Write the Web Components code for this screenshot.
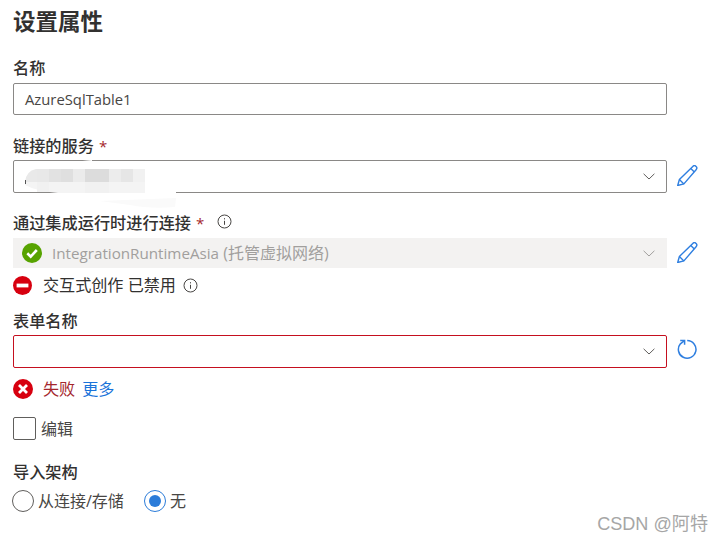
<!DOCTYPE html>
<html lang="zh">
<head>
<meta charset="utf-8">
<title>设置属性</title>
<style>
  html, body { margin: 0; padding: 0; background: #fff; }
  body {
    width: 723px; height: 542px; overflow: hidden; position: relative;
    font-family: "Open Sans", "Noto Sans CJK SC", sans-serif;
    color: #323130;
  }
  .line { display: flex; align-items: center; gap: 8px; }
  .latin { font-size: 15.2px; }
</style>
</head>
<body>
<props-panel>
  <h-title slot="title">设置属性</h-title>

  <form-row top="19">
    <form-label>名称</form-label>
    <text-box value="AzureSqlTable1" style="margin-top:4px"></text-box>
  </form-row>

  <form-row top="20">
    <form-label required>链接的服务</form-label>
    <div class="line">
      <combo-box smudged></combo-box>
      <act-icon name="pencil" style="margin-top:5px"></act-icon>
    </div>
  </form-row>

  <form-row top="19">
    <form-label required info>通过集成运行时进行连接</form-label>
    <div class="line" style="margin-top:4px">
      <combo-box disabled status="ok"><span class="latin">IntegrationRuntimeAsia</span> (托管虚拟网络)</combo-box>
      <act-icon name="pencil"></act-icon>
    </div>
  </form-row>

  <status-line kind="blocked" info style="margin-top:7px">交互式创作 已禁用</status-line>

  <form-row top="15">
    <form-label>表单名称</form-label>
    <div class="line">
      <combo-box invalid></combo-box>
      <act-icon name="refresh"></act-icon>
    </div>
  </form-row>

  <status-line kind="error" link="更多" style="margin-top:11px">失败</status-line>

  <check-box style="margin-top:18px">编辑</check-box>

  <form-row top="21">
    <form-label>导入架构</form-label>
    <div class="line" style="gap:0;margin:7px 0 0 -1px">
      <radio-item>从连接/存储</radio-item>
      <radio-item checked style="margin-left:20px">无</radio-item>
    </div>
  </form-row>
</props-panel>
<water-mark>CSDN @阿特</water-mark>

<script>
const fontStack = '"Open Sans", "Noto Sans CJK SC", sans-serif';
const chevron = `<svg width="12" height="7" viewBox="0 0 12 7" fill="none"><path d="M.6.8 6 6 11.4.8" stroke="currentColor" stroke-width="1"/></svg>`;
const infoIcon = `<svg width="15" height="15" viewBox="0 0 15 15" fill="none" stroke="#484644"><circle cx="7.5" cy="7.5" r="6.5"/><path d="M7.5 6.8v4" /><path d="M7.5 4.2v1.2"/></svg>`;

class PropsPanel extends HTMLElement {
  constructor() {
    super();
    this.attachShadow({ mode: 'open' }).innerHTML = `
      <style>
        :host { display: block; padding: 6px 26px 0 13px; }
      </style>
      <slot name="title"></slot>
      <slot></slot>`;
  }
}

class HTitle extends HTMLElement {
  constructor() {
    super();
    this.attachShadow({ mode: 'open' }).innerHTML = `
      <style>
        :host { display: block; font: 700 22.5px/32px ${fontStack}; color: #323130; height: 32px; }
      </style>
      <slot></slot>`;
  }
}

class FormRow extends HTMLElement {
  constructor() {
    super();
    this.attachShadow({ mode: 'open' }).innerHTML = `
      <style>:host { display: block; }</style>
      <slot></slot>`;
  }
  connectedCallback() {
    this.style.marginTop = (this.getAttribute('top') || 0) + 'px';
  }
}

class FormLabel extends HTMLElement {
  constructor() {
    super();
    this.attachShadow({ mode: 'open' }).innerHTML = `
      <style>
        [hidden] { display: none !important; }
        :host { display: flex; align-items: center; height: 22px; margin-bottom: 3px; font: 500 16.2px/22px ${fontStack}; color: #323130; }
        .req { color: #a4262c; margin-left: 5px; font-size: 15px; }
        .info { margin-left: 13px; display: flex; margin-top: -3px; }
      </style>
      <slot></slot>
      <span class="req" hidden>*</span>
      <span class="info" hidden>${infoIcon}</span>`;
  }
  connectedCallback() {
    this.shadowRoot.querySelector('.req').hidden = !this.hasAttribute('required');
    this.shadowRoot.querySelector('.info').hidden = !this.hasAttribute('info');
  }
}

class TextBox extends HTMLElement {
  constructor() {
    super();
    this.attachShadow({ mode: 'open' }).innerHTML = `
      <style>
        :host { display: block; width: 654px; box-sizing: border-box; height: 32px; border: 1px solid #8a8886; border-radius: 2px; padding: 0 11px; font: 400 14.8px/30px ${fontStack}; color: #484644; }
      </style>
      <span></span>`;
  }
  connectedCallback() {
    this.shadowRoot.querySelector('span').textContent = this.getAttribute('value');
  }
}

class ComboBox extends HTMLElement {
  constructor() {
    super();
    this.attachShadow({ mode: 'open' }).innerHTML = `
      <style>
        :host { display: flex; align-items: center; position: relative; flex: none; width: 654px; box-sizing: border-box; height: 33px; border: 1px solid #8a8886; border-radius: 2px; padding: 0 11px 0 9px; font: 400 16px/30px ${fontStack}; color: #484644; }
        :host([disabled]) { border: none; height: 30px; background: #f3f2f1; color: #a19f9d; border-radius: 0; padding-right: 12px; }
        :host([invalid]) { border-color: #c50f1f; }
        .val { flex: 1; display: flex; align-items: center; gap: 10px; white-space: pre; }
        .arrow { display: flex; color: #605e5c; }
        :host([disabled]) .arrow { color: #a19f9d; }
        .ok { display: none; width: 20px; height: 20px; flex: none; }
        :host([status="ok"]) .ok { display: block; }
        .smudge { display: none; position: absolute; left: -1px; top: -11px; }
        :host([smudged]) .smudge { display: block; }
      </style>
      <div class="val">
        <svg class="ok" viewBox="0 0 20 20"><circle cx="10" cy="10" r="10" fill="#57a300"/><path d="M5.3 10.3 8.7 13.6 14.8 7" fill="none" stroke="#fff" stroke-width="2.6"/></svg>
        <span><slot></slot></span>
      </div>
      <span class="arrow">${chevron}</span>
      <svg class="smudge" width="170" height="60" viewBox="13 149 170 60">
        <path d="M58 193 L150 192 L176 196 L175 206 Q150 208 130 204Z" fill="#fff"/>
        <path d="M73 161 L92 159 L92 168 L73 168Z" fill="#fff"/>
        <path d="M58 188 H176 V198 H58Z" fill="#fff"/>
        <path d="M100 200 L176 197 L175 206 Q150 208 130 204Z" fill="#fafafa"/>
        <path d="M25 181 Q26 170 36 168 H37 V181Z" fill="#e9e9e9"/>
        <rect x="37" y="168" width="12" height="13" fill="#e8e8e8"/>
        <rect x="49" y="168" width="12" height="13" fill="#e2e2e2"/>
        <rect x="61" y="168" width="12" height="13" fill="#dfdfdf"/>
        <rect x="73" y="168" width="12" height="13" fill="#ebebeb"/>
        <rect x="85" y="168" width="24" height="13" fill="#dcdcdc"/>
        <rect x="109" y="168" width="12" height="13" fill="#ececec"/>
        <rect x="121" y="168" width="12" height="13" fill="#e6e6e6"/>
        <rect x="133" y="168" width="12" height="13" fill="#f1f1f1"/>
        <path d="M25 181 H145 V192 H58 Q36 190 25 184Z" fill="#f4f4f4"/>
        <rect x="37" y="181" width="12" height="10" fill="#f1f1f1"/>
        <rect x="85" y="181" width="24" height="11" fill="#f1f1f1"/>
        <rect x="25" y="179" width="1" height="4" fill="#555"/>
      </svg>`;
  }
}

class ActIcon extends HTMLElement {
  constructor() {
    super();
    this.attachShadow({ mode: 'open' }).innerHTML = `
      <style>:host { display: flex; flex: none; align-self: flex-start; margin: 4px 0 0 2px; color: #2f7fe0; }</style>
      <span></span>`;
  }
  connectedCallback() {
    const p = this.getAttribute('name') === 'refresh'
      ? `<svg width="21" height="21" viewBox="0 0 21 21" fill="none" stroke="currentColor" stroke-width="1.5"><path d="M10.2 1.6a8.8 8.8 0 1 1-6.8 3.2L7.4 1.6"/><path d="M3.2 1.4H7.6V5.8"/></svg>`
      : `<svg width="21" height="21" viewBox="2 1.5 21 21" fill="none" stroke="currentColor" stroke-width="1.4" stroke-linejoin="round"><path d="M2.7 22l1.7-6L17.8 2.9a2.3 2.3 0 0 1 3.2 0l.1.1a2.3 2.3 0 0 1 0 3.2L8.9 20.4Z"/><path d="M4.4 16l4.5 4.4"/><path d="M15.8 5l3.3 3.3"/></svg>`;
    this.shadowRoot.querySelector('span').innerHTML = p;
  }
}

class StatusLine extends HTMLElement {
  constructor() {
    super();
    this.attachShadow({ mode: 'open' }).innerHTML = `
      <style>
        [hidden] { display: none !important; }
        :host { display: flex; align-items: center; height: 20px; font: 400 16.1px/20px ${fontStack}; color: #323130; }
        .ic { display: flex; width: 20px; margin-right: 10px; flex: none; }
        :host([kind="error"]) { color: #a4262c; }
        a { color: #1a73d9; margin-left: 7px; }
        .info { display: flex; margin-left: 7px; }
      </style>
      <span class="ic"></span><slot></slot>
      <a hidden></a>
      <span class="info" hidden>${infoIcon}</span>`;
  }
  connectedCallback() {
    const kind = this.getAttribute('kind');
    this.shadowRoot.querySelector('.ic').innerHTML = kind === 'error'
      ? `<svg width="20" height="20" viewBox="0 0 20 20"><circle cx="10" cy="10" r="10" fill="#d7000f"/><path d="M6 6l8 8M14 6l-8 8" stroke="#fff" stroke-width="2.8"/></svg>`
      : `<svg width="19" height="19" viewBox="0 0 19 19"><circle cx="9.5" cy="9.5" r="9.5" fill="#d7000f"/><rect x="3.6" y="7.6" width="11.8" height="3.8" fill="#fff"/></svg>`;
    const link = this.shadowRoot.querySelector('a');
    if (this.hasAttribute('link')) { link.hidden = false; link.textContent = this.getAttribute('link'); }
    this.shadowRoot.querySelector('.info').hidden = !this.hasAttribute('info');
  }
}

class CheckBox extends HTMLElement {
  constructor() {
    super();
    this.attachShadow({ mode: 'open' }).innerHTML = `
      <style>
        :host { display: flex; align-items: center; font: 400 16px/20px ${fontStack}; color: #484644; }
        .b { box-sizing: border-box; width: 23px; height: 23px; border: 1px solid #605e5c; border-radius: 2px; margin-right: 5px; }
      </style>
      <span class="b"></span><slot></slot>`;
  }
}

class RadioItem extends HTMLElement {
  constructor() {
    super();
    this.attachShadow({ mode: 'open' }).innerHTML = `
      <style>
        :host { display: flex; align-items: center; font: 400 16px/20px ${fontStack}; color: #484644; }
        .r { box-sizing: border-box; width: 22px; height: 22px; border: 1px solid #605e5c; border-radius: 50%; margin-right: 4px; display: flex; align-items: center; justify-content: center; }
        :host([checked]) .r { border-color: #2b7cd9; }
        :host([checked]) .r::after { content: ""; width: 12px; height: 12px; background: #2b7cd9; border-radius: 50%; }
      </style>
      <span class="r"></span><slot></slot>`;
  }
}

class WaterMark extends HTMLElement {
  constructor() {
    super();
    this.attachShadow({ mode: 'open' }).innerHTML = `
      <style>
        :host { position: absolute; right: 15px; top: 512px; font: 400 18.1px/24px "Liberation Sans", "Noto Sans CJK SC", sans-serif; color: #a6a6a6; white-space: nowrap; }
      </style>
      <slot></slot>`;
  }
}

customElements.define('props-panel', PropsPanel);
customElements.define('h-title', HTitle);
customElements.define('form-row', FormRow);
customElements.define('form-label', FormLabel);
customElements.define('text-box', TextBox);
customElements.define('combo-box', ComboBox);
customElements.define('act-icon', ActIcon);
customElements.define('status-line', StatusLine);
customElements.define('check-box', CheckBox);
customElements.define('radio-item', RadioItem);
customElements.define('water-mark', WaterMark);
</script>
</body>
</html>
